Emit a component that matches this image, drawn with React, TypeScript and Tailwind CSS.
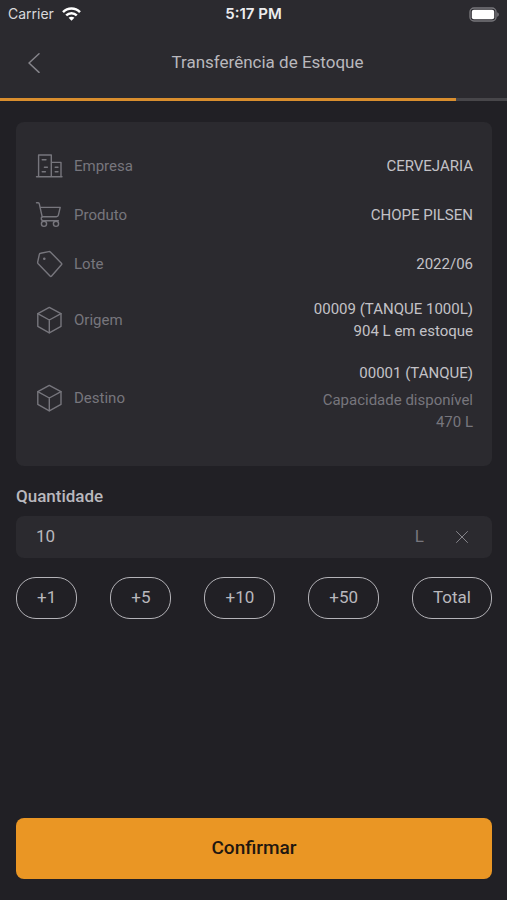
import { useState } from 'react';
import type { ReactNode } from 'react';

const QUICK_AMOUNTS = [1, 5, 10, 50];
const AVAILABLE = 470;

// ── Icons ───────────────────────────────────────────────────
function LineIcon({ children }: { children: ReactNode }) {
  return (
    <svg
      width="26"
      height="26"
      viewBox="0 0 26 26"
      fill="none"
      stroke="currentColor"
      strokeWidth="1.4"
      strokeLinecap="round"
      strokeLinejoin="round"
      className="shrink-0 overflow-visible"
      aria-hidden="true"
    >
      {children}
    </svg>
  );
}

const CompanyIcon = () => (
  <LineIcon>
    <path d="M0.5 23.7H26M2.6 23.7V2H15.3V23.7M15.3 9.4H25V23.7" />
    <path d="M6.2 6.7H10M8.4 14.2H11.4M6.2 18.8H9.4M19.2 14.2H22M19.2 18.8H22" />
  </LineIcon>
);

const CartIcon = () => (
  <LineIcon>
    <path d="M0.5 0.8H2.2Q3.1 0.8 3.3 1.8L6.2 14.8H20.4Q22 14.8 22.4 13.2L24.2 5.4H4.2" />
    <path d="M6.2 14.8Q4.8 15.6 5.3 17.2Q5.8 18.7 7.4 18.7H22.4" />
    <circle cx="8" cy="21.8" r="2.6" />
    <circle cx="20" cy="21.8" r="2.6" />
  </LineIcon>
);

const TagIcon = () => (
  <LineIcon>
    <path d="M4.6 2.3L12.8 0.6Q13.8 0.4 14.6 1.2L25.4 12.2Q26.2 13 25.4 13.8L15.6 25Q14.8 25.9 14 25L2.2 12.8Q1.5 12 1.7 11L3.3 3.6Q3.5 2.5 4.6 2.3Z" />
    <circle cx="8.3" cy="7.7" r="0.6" fill="currentColor" />
  </LineIcon>
);

const BoxIcon = () => (
  <LineIcon>
    <path d="M13.3 0.4L25 6.7V19.4L13.3 25.8L1.8 19.4V6.7Z" />
    <path d="M1.8 6.7L13.3 13L25 6.7M13.3 13V25.8" />
  </LineIcon>
);

// ── Row of the summary card ─────────────────────────────────
function InfoRow({ icon, label, children }: { icon: ReactNode; label: string; children: ReactNode }) {
  return (
    <div className="flex min-h-[29px] items-center justify-between gap-4">
      <dt className="flex items-center gap-3 text-[#77767d]">
        {icon}
        {label}
      </dt>
      <dd className="text-right text-[#c3c2c7]">{children}</dd>
    </div>
  );
}

export default function App() {
  const [amount, setAmount] = useState('10');

  const add = (n: number) => setAmount(String((Number(amount) || 0) + n));

  return (
    <div className="flex min-h-screen flex-col bg-[#212025] font-['Roboto',sans-serif] text-[#b9b8bd]">
      <header className="bg-[#2b2a2f]">
        {/* Status bar */}
        <div className="grid h-7 grid-cols-3 items-center px-2 font-['Inter',sans-serif]">
          <div className="flex items-center gap-2 text-sm text-[#d9d9dc]">
            Carrier
            <svg width="19" height="14" viewBox="0 0 19 14" fill="none" stroke="#fff" strokeWidth="2.5" aria-hidden="true">
              <path d="M1 5.2C5.8 0.4 13.2 0.4 18 5.2" />
              <path d="M4.2 8.4C7.2 5.5 11.8 5.5 14.8 8.4" />
              <path d="M9.5 13.8L6.6 10.8C8.2 9.3 10.8 9.3 12.4 10.8Z" fill="#fff" stroke="none" />
            </svg>
          </div>
          <span className="text-center text-[15px] font-semibold text-[#ececee]">5:17 PM</span>
          <svg width="30" height="15" viewBox="0 0 30 15" className="justify-self-end" aria-hidden="true">
            <rect x="1" y="1" width="26" height="13" rx="4" fill="none" stroke="#77767b" strokeWidth="1.4" />
            <rect x="2.8" y="2.8" width="22.4" height="9.4" rx="2" fill="#fff" />
            <path d="M28.2 5.2C30.4 6 30.4 9 28.2 9.8Z" fill="#77767b" />
          </svg>
        </div>

        <div className="flex h-[70px] items-center px-5">
          <button type="button" aria-label="Voltar" className="flex size-7 items-center justify-center text-[#85848a]">
            <svg width="12" height="20" viewBox="0 0 12 20" fill="none" stroke="currentColor" strokeWidth="1.5" strokeLinecap="round" strokeLinejoin="round">
              <path d="M11 0.8L1 10L11 19.4" />
            </svg>
          </button>
          <h1 className="flex-1 text-center text-[17px]">Transferência de Estoque</h1>
        </div>

        <div className="h-[3px] bg-[#47464a]">
          <div className="h-full w-9/10 bg-[#d98e2e]" />
        </div>
      </header>

      <main className="flex flex-1 flex-col pb-[21px] pl-4 pr-[15px] pt-[21px]">
        <dl className="flex flex-col gap-5 rounded-lg bg-[#2b2a2f] pb-[33px] pl-5 pr-[19px] pt-[29px] text-[15px] leading-[22px]">
          <InfoRow icon={<CompanyIcon />} label="Empresa">CERVEJARIA</InfoRow>
          <InfoRow icon={<CartIcon />} label="Produto">CHOPE PILSEN</InfoRow>
          <InfoRow icon={<TagIcon />} label="Lote">2022/06</InfoRow>
          <InfoRow icon={<BoxIcon />} label="Origem">
            <p>00009 (TANQUE 1000L)</p>
            <p>904 L em estoque</p>
          </InfoRow>
          <InfoRow icon={<BoxIcon />} label="Destino">
            <p>00001 (TANQUE)</p>
            <div className="mt-[5px] text-[#77767d]">
              <p>Capacidade disponível</p>
              <p>{AVAILABLE} L</p>
            </div>
          </InfoRow>
        </dl>

        {/* Quantity */}
        <label htmlFor="amount" className="mt-[18px] text-[17px] leading-6 font-medium">Quantidade</label>
        <div className="mt-2 flex h-[42px] items-center rounded-lg bg-[#2b2a2f] px-5 text-[17px] focus-within:ring-1 focus-within:ring-[#ea9624]">
          <input
            id="amount"
            type="text"
            inputMode="numeric"
            value={amount}
            onChange={(e) => setAmount(e.target.value)}
            className="min-w-0 flex-1 bg-transparent outline-none"
          />
          <span className="text-[#77767d]">L</span>
          <button type="button" aria-label="Limpar" onClick={() => setAmount('')} className="ml-7 flex size-5 items-center justify-center text-[#85848a]">
            <svg width="12" height="12" viewBox="0 0 12 12" fill="none" stroke="currentColor" strokeWidth="1" strokeLinecap="round">
              <path d="M0.5 0.5L11.5 11.5M11.5 0.5L0.5 11.5" />
            </svg>
          </button>
        </div>

        <div className="mt-[19px] flex justify-between">
          {QUICK_AMOUNTS.map((n) => (
            <button
              key={n}
              type="button"
              onClick={() => add(n)}
              className="h-[42px] rounded-[20px] border border-[#b4b3b8] px-5 text-[17px]"
            >
              +{n}
            </button>
          ))}
          <button
            type="button"
            onClick={() => setAmount(String(AVAILABLE))}
            className="h-[42px] rounded-[20px] border border-[#b4b3b8] px-5 text-[17px]"
          >
            Total
          </button>
        </div>

        <button type="button" className="mt-auto h-[61px] rounded-lg bg-[#ea9624] text-[19px] font-medium text-[#1f1710]">
          Confirmar
        </button>
      </main>
    </div>
  );
}
